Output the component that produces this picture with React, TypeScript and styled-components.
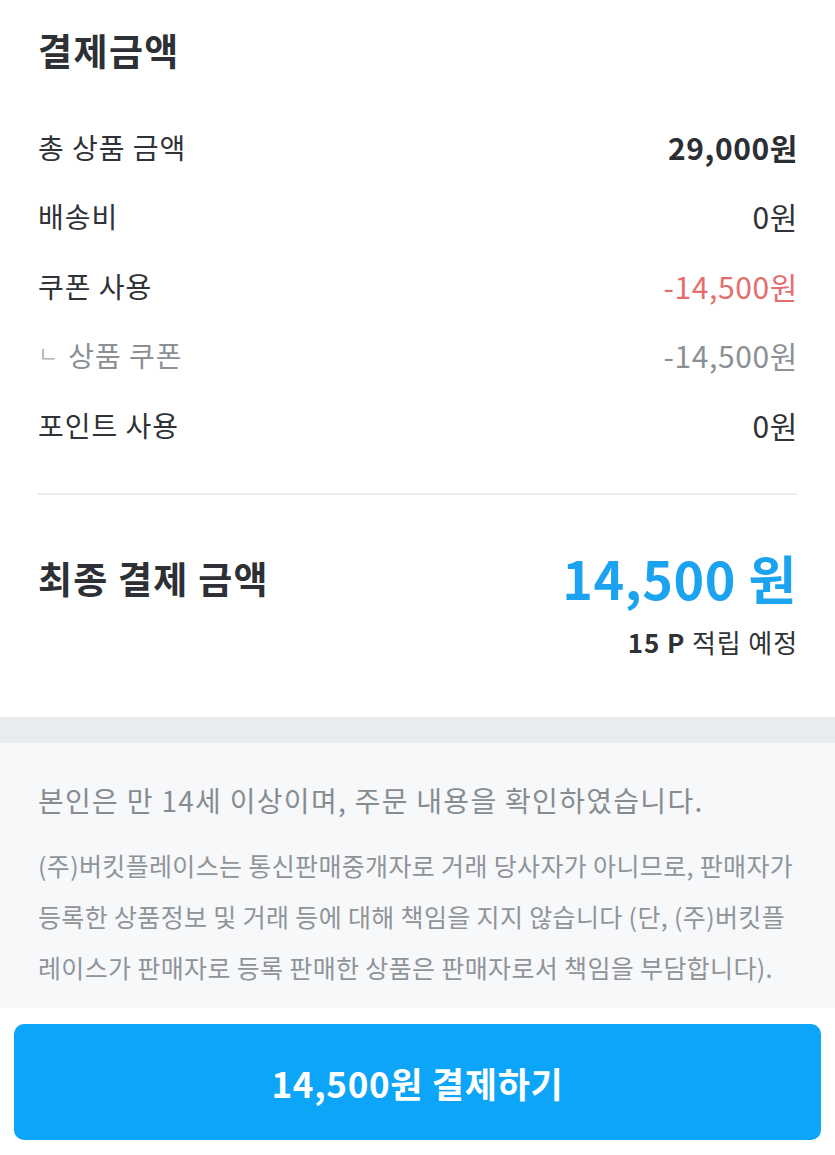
import React from "react";
import styled, { createGlobalStyle } from "styled-components";

const GlobalStyle = createGlobalStyle`
  html, body {
    margin: 0;
    padding: 0;
    background: #ffffff;
  }
  body {
    font-family: "Noto Sans CJK KR", "Noto Sans", sans-serif;
    -webkit-font-smoothing: antialiased;
  }
`;

const Page = styled.div`
  width: 835px;
  height: 1155px;
  display: flex;
  flex-direction: column;
  overflow: hidden;
`;

const Summary = styled.section`
  height: 717px;
  box-sizing: border-box;
  padding: 26px 38px 0;
  display: flex;
  flex-direction: column;
`;

const Title = styled.h2`
  margin: 0;
  font-size: 37px;
  line-height: 48px;
  font-weight: 700;
  color: #2d3035;
  letter-spacing: 1.4px;
`;

const Rows = styled.div`
  margin-top: 38px;
  display: flex;
  flex-direction: column;
`;

const Row = styled.div`
  height: 69.5px;
  display: flex;
  align-items: center;
  justify-content: space-between;
`;

const Label = styled.span<{ $sub?: boolean }>`
  font-size: 28px;
  letter-spacing: 1px;
  color: ${(p) => (p.$sub ? "#8b9095" : "#2f3236")};
  display: flex;
  align-items: center;
`;

const Corner = styled.span`
  font-size: 22px;
  color: #b1b5b9;
  margin-right: 9px;
  margin-top: -6px;
`;

type Tone = "default" | "strong" | "minus" | "sub";

const toneColor: Record<Tone, string> = {
  default: "#2f3236",
  strong: "#2b2e33",
  minus: "#e46d6d",
  sub: "#8b9095",
};

const Value = styled.span<{ $tone: Tone }>`
  font-size: 30px;
  letter-spacing: 0.6px;
  margin-right: -1px;
  font-weight: ${(p) => (p.$tone === "strong" ? 700 : 400)};
  color: ${(p) => toneColor[p.$tone]};
`;

const Line = styled.hr`
  margin: 33px 0 0;
  border: none;
  height: 2px;
  background: #ececed;
`;

const TotalRow = styled.div`
  margin-top: 48px;
  height: 70px;
  display: flex;
  align-items: center;
  justify-content: space-between;
`;

const TotalLabel = styled.span`
  font-size: 37px;
  font-weight: 700;
  letter-spacing: 1.2px;
  color: #2d3035;
`;

const TotalValue = styled.span`
  font-size: 52px;
  font-weight: 700;
  letter-spacing: 0.6px;
  color: #1ba3ef;
`;

const Points = styled.div`
  margin-top: 12px;
  margin-right: -1px;
  text-align: right;
  font-size: 26px;
  line-height: 34px;
  letter-spacing: 0.9px;
  color: #2f3236;

  b {
    font-weight: 700;
  }
`;

const Band = styled.div`
  height: 26px;
  background: #e9ecef;
`;

const Notice = styled.section`
  height: 265px;
  box-sizing: border-box;
  background: #f7f8fa;
  padding: 37px 38px 0;
`;

const Agree = styled.p`
  margin: 0;
  font-size: 28px;
  line-height: 40px;
  letter-spacing: 1.3px;
  color: #878c91;
`;

const Disclaimer = styled.p`
  margin: 20px 0 0;
  font-size: 25px;
  line-height: 51px;
  letter-spacing: 0.35px;
  color: #8f9499;
  white-space: nowrap;
`;

const Footer = styled.div`
  flex: 1;
  padding: 16px 14px 15px;
  display: flex;
`;

const PayButton = styled.button`
  flex: 1;
  height: 116px;
  border: none;
  border-radius: 10px;
  background: #0ca5f8;
  color: #ffffff;
  font-family: inherit;
  font-size: 35px;
  font-weight: 700;
  letter-spacing: 0.7px;
  cursor: pointer;
`;

const rows: { label: string; value: string; tone: Tone; sub?: boolean }[] = [
  { label: "총 상품 금액", value: "29,000원", tone: "strong" },
  { label: "배송비", value: "0원", tone: "default" },
  { label: "쿠폰 사용", value: "-14,500원", tone: "minus" },
  { label: "상품 쿠폰", value: "-14,500원", tone: "sub", sub: true },
  { label: "포인트 사용", value: "0원", tone: "default" },
];

export default function App() {
  return (
    <>
      <GlobalStyle />
      <Page>
        <Summary>
          <Title>결제금액</Title>
          <Rows>
            {rows.map((r) => (
              <Row key={r.label}>
                <Label $sub={r.sub}>
                  {r.sub && <Corner>ㄴ</Corner>}
                  {r.label}
                </Label>
                <Value $tone={r.tone}>{r.value}</Value>
              </Row>
            ))}
          </Rows>
          <Line />
          <TotalRow>
            <TotalLabel>최종 결제 금액</TotalLabel>
            <TotalValue>14,500 원</TotalValue>
          </TotalRow>
          <Points>
            <b>15 P</b> 적립 예정
          </Points>
        </Summary>
        <Band />
        <Notice>
          <Agree>본인은 만 14세 이상이며, 주문 내용을 확인하였습니다.</Agree>
          <Disclaimer>
            (주)버킷플레이스는 통신판매중개자로 거래 당사자가 아니므로, 판매자가
            <br />
            등록한 상품정보 및 거래 등에 대해 책임을 지지 않습니다 (단, (주)버킷플
            <br />
            레이스가 판매자로 등록 판매한 상품은 판매자로서 책임을 부담합니다).
          </Disclaimer>
        </Notice>
        <Footer>
          <PayButton>14,500원 결제하기</PayButton>
        </Footer>
      </Page>
    </>
  );
}
